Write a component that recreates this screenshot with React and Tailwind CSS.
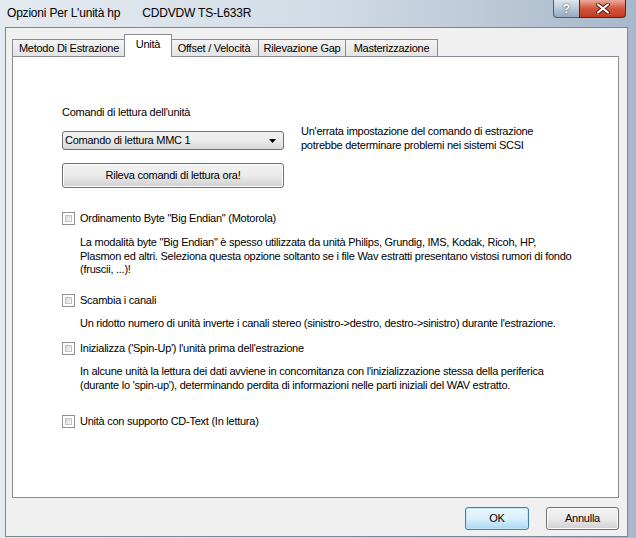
const ui = { fontFamily: '"Liberation Sans", Arial, sans-serif' }

function CheckBox() {
  return (
    <div className="w-[13px] h-[13px] shrink-0 border border-[#8e8f8f] bg-white p-[2px]">
      <div className="w-full h-full bg-gradient-to-br from-[#d6d6d6] to-[#f7f7f7] border border-[#c4c4c4]" />
    </div>
  )
}

function Check({ label, className = '' }) {
  return (
    <div className={`flex items-center h-[13px] ${className}`}>
      <CheckBox />
      <span className="ml-[5px] text-[11px] leading-[13px] tracking-[-0.25px] text-black whitespace-nowrap">{label}</span>
    </div>
  )
}

function Desc({ children, className = '' }) {
  return (
    <p className={`ml-[18px] text-[11px] leading-[13.5px] tracking-[-0.25px] text-black ${className}`}>{children}</p>
  )
}

function Tab({ label, w, active }) {
  if (active) {
    return (
      <div className={`${w} h-[23px] -mx-[2px] relative z-10 bg-white border border-b-0 border-[#898c95] flex items-start justify-center pt-[3px] text-[11px] leading-[13px] tracking-[-0.25px]`}>
        {label}
      </div>
    )
  }
  return (
    <div className={`${w} h-[18px] -ml-px first:ml-0 bg-gradient-to-b from-[#f3f3f3] to-[#e2e2e2] border border-b-0 border-[#898c95] flex items-center justify-center text-[11px] leading-[13px] tracking-[-0.25px]`}>
      {label}
    </div>
  )
}

function WinButton({ children, primary, w }) {
  return (
    <button
      className={`${w} h-[23px] rounded-[3px] border text-[11px] leading-[13px] tracking-[-0.25px] text-black ${
        primary
          ? 'border-[#3c7fb1] bg-gradient-to-b from-[#eaf6fd] via-[#d9f0fc] to-[#a7d9f5] shadow-[inset_0_0_0_1px_#c5e6f8]'
          : 'border-[#707070] bg-gradient-to-b from-[#f2f2f2] via-[#ebebeb] to-[#cfcfcf] shadow-[inset_0_0_0_1px_#fcfcfc]'
      }`}
    >
      {children}
    </button>
  )
}

export default function App() {
  return (
    <div
      className="w-[636px] h-[538px] overflow-hidden bg-gradient-to-r from-[#e4eaf0] via-[#d3dce6] to-[#a7b8ca] flex flex-col"
      style={ui}
    >
      {/* title bar */}
      <div className="h-[27px] shrink-0 flex items-start relative">
        <div className="pl-[7px] pt-[6px] flex text-[12px] leading-[15px] tracking-[-0.2px] text-black">
          <span>Opzioni Per L'unità hp</span>
          <span className="ml-[22px]">CDDVDW TS-L633R</span>
        </div>
        <div className="ml-auto mr-[10px] flex h-[18px]">
          <div className="w-[27px] h-[18px] rounded-bl-[4px] border border-t-0 border-[#4b5d72] bg-gradient-to-b from-[#e0e8f0] via-[#b9c7d6] to-[#95a9bf] flex items-center justify-center text-white text-[12px] font-bold [text-shadow:0_0_2px_#2c3e55]">
            ?
          </div>
          <div className="w-[47px] h-[18px] -ml-px rounded-br-[4px] border border-t-0 border-[#5b2318] bg-gradient-to-b from-[#e9a999] via-[#d2553d] to-[#c23a20] flex items-center justify-center">
            <svg width="14" height="11" viewBox="0 0 14 11">
              <path d="M2 1.5 L12 9.5 M12 1.5 L2 9.5" stroke="#4a1a10" strokeWidth="4" strokeLinecap="round" />
              <path d="M2 1.5 L12 9.5 M12 1.5 L2 9.5" stroke="#ffffff" strokeWidth="2.2" strokeLinecap="round" />
            </svg>
          </div>
        </div>
      </div>

      {/* client area */}
      <div className="ml-[5px] w-[623px] h-[510px] border border-[#7d8791] bg-[#f0f0f0] flex flex-col px-[6px] pt-[7px]">
        {/* tabs */}
        <div className="flex items-end h-[22px]">
          <Tab label="Metodo Di Estrazione" w="w-[114px]" />
          <Tab label="Unità" w="w-[48px]" active />
          <Tab label="Offset / Velocità" w="w-[90px]" />
          <Tab label="Rilevazione Gap" w="w-[88px]" />
          <Tab label="Masterizzazione" w="w-[93px]" />
        </div>

        {/* panel */}
        <div className="-mt-px w-[607px] h-[442px] border border-[#898c95] bg-white pl-[49px] flex flex-col text-black">
          <div className="mt-[49px] text-[11px] leading-[13px] tracking-[-0.25px]">Comandi di lettura dell'unità</div>

          <div className="mt-[5px] flex items-start">
            <div className="mt-[7px] w-[222px] h-[19px] rounded-[3px] border border-[#707070] bg-gradient-to-b from-[#f2f2f2] via-[#ebebeb] to-[#d8d8d8] flex items-center pl-[2px] pr-[7px] text-[11px] leading-[13px] tracking-[-0.25px]">
              <span>Comando di lettura MMC 1</span>
              <svg className="ml-auto" width="7" height="4" viewBox="0 0 7 4">
                <path d="M0 0 H7 L3.5 4 Z" fill="#000" />
              </svg>
            </div>
            <div className="ml-[17px] text-[11px] leading-[14px] tracking-[-0.25px]">
              Un'errata impostazione del comando di estrazione
              <br />
              potrebbe determinare problemi nei sistemi SCSI
            </div>
          </div>

          <div className="mt-[11px] w-[222px] h-[25px] rounded-[3px] border border-[#707070] bg-gradient-to-b from-[#f2f2f2] via-[#ebebeb] to-[#cfcfcf] shadow-[inset_0_0_0_1px_#fcfcfc] flex items-center justify-center text-[11px] leading-[13px] tracking-[-0.25px]">
            Rileva comandi di lettura ora!
          </div>

          <Check className="mt-[24px]" label={'Ordinamento Byte "Big Endian" (Motorola)'} />
          <Desc className="mt-[11px] w-[520px]">
            La modalità byte "Big Endian" è spesso utilizzata da unità Philips, Grundig, IMS, Kodak, Ricoh, HP,
            <br />
            Plasmon ed altri. Seleziona questa opzione soltanto se i file Wav estratti presentano vistosi rumori di fondo
            <br />
            (fruscii, ...)!
          </Desc>

          <Check className="mt-[17px]" label="Scambia i canali" />
          <Desc className="mt-[10px]">
            Un ridotto numero di unità inverte i canali stereo (sinistro-&gt;destro, destro-&gt;sinistro) durante l'estrazione.
          </Desc>

          <Check className="mt-[12px]" label="Inizializza ('Spin-Up') l'unità prima dell'estrazione" />
          <Desc className="mt-[10px]">
            In alcune unità la lettura dei dati avviene in concomitanza con l'inizializzazione stessa della periferica
            <br />
            (durante lo 'spin-up'), determinando perdita di informazioni nelle parti iniziali del WAV estratto.
          </Desc>

          <Check className="mt-[23px]" label="Unità con supporto CD-Text (In lettura)" />
        </div>

        {/* buttons */}
        <div className="mt-[9px] flex justify-end gap-[17px] pr-[2px]">
          <WinButton primary w="w-[64px]">OK</WinButton>
          <WinButton w="w-[73px]">Annulla</WinButton>
        </div>
      </div>
    </div>
  )
}
